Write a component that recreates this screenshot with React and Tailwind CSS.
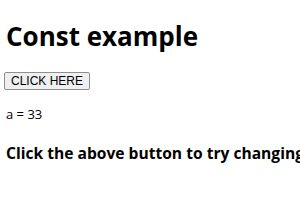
import React, { useState } from 'react';

const App = () => {
    const [a] = useState(33);

    return (
        <div className="w-[300px] h-[210px] overflow-hidden bg-white text-black px-[6px] font-['Open_Sans',sans-serif]">
            <h1 className="text-[26px] font-bold leading-none pt-[23px] whitespace-nowrap">Const example</h1>

            <button className="mt-[23px] -ml-[2px] px-[6px] h-[18px] text-[12px] leading-none font-['Liberation_Sans',sans-serif] bg-[#efefef] border border-[#8f8f8f] rounded-[2px]">
                CLICK HERE
            </button>

            <p className="mt-[17px] text-[13px] leading-none">a = {a}</p>

            <h3 className="mt-[25px] text-[15.6px] font-bold leading-none whitespace-nowrap">
                Click the above button to try changing the value of a
            </h3>
        </div>
    );
};

export default App;
